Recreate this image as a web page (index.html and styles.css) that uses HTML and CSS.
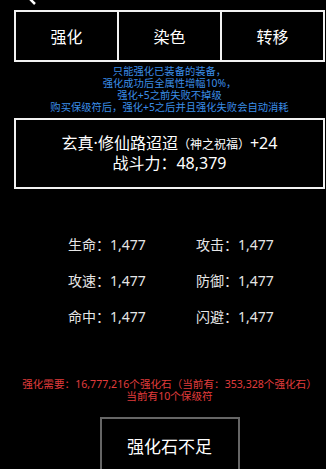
FILE: index.html
```html
<!DOCTYPE html>
<html>
  <head>
    <title>强化</title>
    <link rel="stylesheet" href="styles.css">
  </head>
  <body>
    <div class="page">
      <div class="topbar">
        <svg class="back-icon" width="14" height="14" viewBox="0 0 14 14">
          <path d="M9 1 L3 7 L9 13" fill="none" stroke="#fff" stroke-width="2.5"/>
        </svg>
      </div>

      <div class="tabs">
        <div class="tab">强化</div>
        <div class="tab">染色</div>
        <div class="tab">转移</div>
      </div>

      <div class="tips">
        只能强化已装备的装备，<br>
        强化成功后全属性增幅10%，<br>
        强化+5之前失败不掉级<br>
        购买保级符后，强化+5之后并且强化失败会自动消耗
      </div>

      <div class="item-box">
        <div class="item-name">玄真·修仙路迢迢<span class="item-tag">（神之祝福）</span>+24</div>
        <div class="item-power">战斗力：48,379</div>
      </div>

      <div class="stats">
        <div class="stat">生命：1,477</div>
        <div class="stat">攻击：1,477</div>
        <div class="stat">攻速：1,477</div>
        <div class="stat">防御：1,477</div>
        <div class="stat">命中：1,477</div>
        <div class="stat">闪避：1,477</div>
      </div>

      <div class="cost">
        强化需要：16,777,216个强化石（当前有：353,328个强化石）<br>
        当前有10个保级符
      </div>

      <div class="action">
        <div class="btn">强化石不足</div>
      </div>
    </div>
  </body>
</html>
```

FILE: styles.css
```css
html, body {
  margin: 0;
  background: #000;
  overflow: hidden;
}

.page {
  width: 311px;
  margin-left: 14px;
  font-family: "Noto Sans", "Noto Sans CJK SC", sans-serif;
  color: #fff;
}

.topbar {
  height: 10px;
  position: relative;
}

.back-icon {
  position: absolute;
  left: 12px;
  top: -9px;
}

.tabs {
  display: flex;
  border: 2px solid #f2f2f2;
  height: 48px;
}

.tab {
  flex: 1;
  display: flex;
  align-items: center;
  justify-content: center;
  font-size: 16px;
  border-left: 2px solid #f2f2f2;
}

.tab:first-child {
  border-left: none;
}

.tips {
  color: #3b8ee8;
  font-size: 10.3px;
  line-height: 12px;
  text-align: center;
  margin-top: 3px;
}

.item-box {
  margin-top: 5px;
  border: 2px solid #f2f2f2;
  height: 67px;
  display: flex;
  flex-direction: column;
  justify-content: center;
  align-items: center;
  line-height: 19px;
}

.item-name {
  font-size: 16px;
}

.item-tag {
  font-size: 12px;
}

.item-power {
  font-size: 16px;
}

.stats {
  display: grid;
  grid-template-columns: 128px 128px;
  row-gap: 17px;
  margin-top: 46px;
  padding-left: 54px;
  font-size: 14px;
  line-height: 19px;
  color: #e6e6e6;
}

.cost {
  color: #e03c3c;
  font-size: 10.6px;
  line-height: 12px;
  text-align: center;
  margin-top: 52px;
}

.action {
  display: flex;
  justify-content: center;
  margin-top: 15px;
}

.btn {
  width: 140px;
  height: 60px;
  box-sizing: border-box;
  border: 2px solid #666;
  display: flex;
  align-items: center;
  justify-content: center;
  font-size: 17px;
  padding-bottom: 4px;
}
```
